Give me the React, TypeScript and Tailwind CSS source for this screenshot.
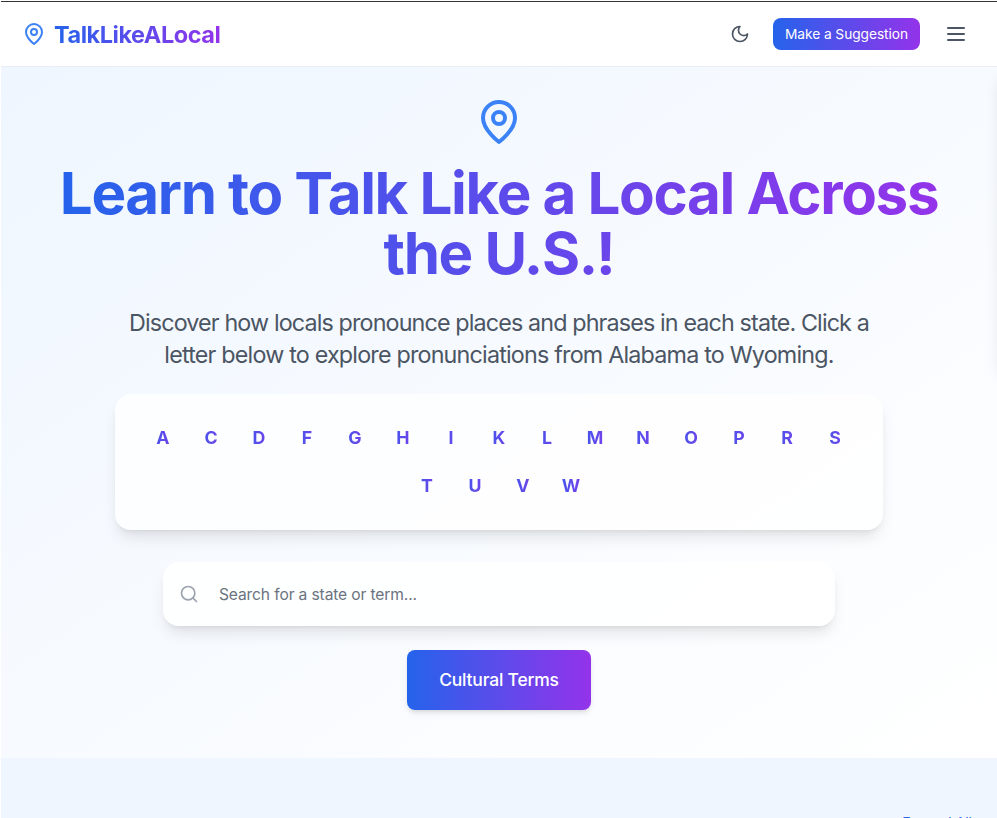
import { Search } from "lucide-react";

const rows = ["ACDFGHIKLMNOPRS".split(""), "TUVW".split("")];

function Pin({ className }: { className: string }) {
  return (
    <svg viewBox="0 0 24 24" fill="none" stroke="currentColor" strokeWidth="2" strokeLinecap="round" strokeLinejoin="round" className={className}>
      <path d="M20 10c0 6-8 12-8 12s-8-6-8-12a8 8 0 0 1 16 0Z" />
      <circle cx="12" cy="10" r="3" />
    </svg>
  );
}

function Moon({ className }: { className: string }) {
  return (
    <svg viewBox="0 0 24 24" fill="none" stroke="currentColor" strokeWidth="2" strokeLinecap="round" strokeLinejoin="round" className={className}>
      <path d="M12 3a6 6 0 0 0 9 9 9 9 0 1 1-9-9Z" />
    </svg>
  );
}

function Menu({ className }: { className: string }) {
  return (
    <svg viewBox="0 0 24 24" fill="none" stroke="currentColor" strokeWidth="2" strokeLinecap="round" className={className}>
      <path d="M4 6h16M4 12h16M4 18h16" />
    </svg>
  );
}

export default function App() {
  return (
    <div className="relative h-[818px] overflow-hidden border-l border-white bg-white pt-px font-['Inter',sans-serif]">
      <header className="flex h-[66px] items-center justify-between border-t border-b border-t-[#333] border-b-[#e9eef5] bg-white pr-[29px] pl-[21px]">
        <div className="flex items-center gap-2">
          <Pin className="size-6 text-[#3b82f6]" />
          <span className="bg-linear-to-r/srgb from-[#2563eb] to-[#9333ea] bg-clip-text pt-px text-[23.5px] leading-8 font-bold tracking-[-0.47px] text-transparent">TalkLikeALocal</span>
        </div>
        <div className="flex items-center">
          <Moon className="mr-[23px] size-5 text-[#4b5563]" />
          <button className="h-8 w-[147px] rounded-lg bg-linear-to-r/srgb from-[#2563eb] to-[#9333ea] text-[13.75px] tracking-[-0.06px] whitespace-nowrap text-white">Make a Suggestion</button>
          <Menu className="ml-6 size-6 text-[#4b5563]" />
        </div>
      </header>
      <main className="flex h-[691px] flex-col items-center bg-linear-to-br/srgb from-[#eff6ff] to-white pt-[31px]">
        <Pin className="size-12 shrink-0 text-[#3b82f6]" />
        <h1 className="mt-[17px] bg-linear-to-r/srgb from-[#2563eb] to-[#9333ea] bg-clip-text text-center text-[58.3px] leading-[60px] font-bold tracking-[-1.35px] whitespace-nowrap text-transparent">
          Learn to Talk Like a Local Across<br />the U.S.!
        </h1>
        <p className="mt-6 text-center text-[23.3px] leading-8 tracking-[-0.86px] whitespace-nowrap text-[#4b5563]">
          Discover how locals pronounce places and phrases in each state. Click a<br />
          <span className="tracking-[-0.8px]">letter below to explore pronunciations from Alabama to Wyoming.</span>
        </p>
        <div className="mt-[23px] flex h-[136px] w-[768px] shrink-0 flex-col items-center justify-center gap-2 rounded-2xl bg-white/80 shadow-[0_10px_15px_-3px_rgba(0,0,0,0.1),0_4px_6px_-4px_rgba(0,0,0,0.1)]">
          {rows.map((r) => (
            <div key={r[0]} className="flex gap-2">
              {r.map((c) => (
                <button key={c} className="size-10 bg-linear-to-r/srgb from-[#2563eb] to-[#9333ea] bg-clip-text text-[17.75px] font-bold text-transparent">{c}</button>
              ))}
            </div>
          ))}
        </div>
        <div className="mt-8 flex h-16 w-[672px] shrink-0 items-center rounded-2xl bg-white/90 pl-4 shadow-[0_10px_15px_-3px_rgba(0,0,0,0.1),0_4px_6px_-4px_rgba(0,0,0,0.1)]">
          <Search className="size-5 text-[#9ca3af]" />
          <span className="ml-5 pt-0.5 text-[15.6px] tracking-[-0.13px] text-[#6b7280]">Search for a state or term...</span>
        </div>
        <button className="mt-6 h-[60px] w-[184px] shrink-0 rounded-lg bg-linear-to-r/srgb from-[#2563eb] to-[#9333ea] pt-px text-[17.5px] font-medium tracking-[-0.2px] text-white shadow-md">Cultural Terms</button>
      </main>
      <section className="flex h-[60px] justify-end bg-[#eff6ff] pt-[55px] pr-[25px]">
        <span className="text-sm text-[#2563eb]">Expand All</span>
      </section>
      <div className="absolute top-[67px] left-full h-[300px] w-64 shadow-[0_10px_15px_-3px_rgba(0,0,0,0.1)]" />
    </div>
  );
}
